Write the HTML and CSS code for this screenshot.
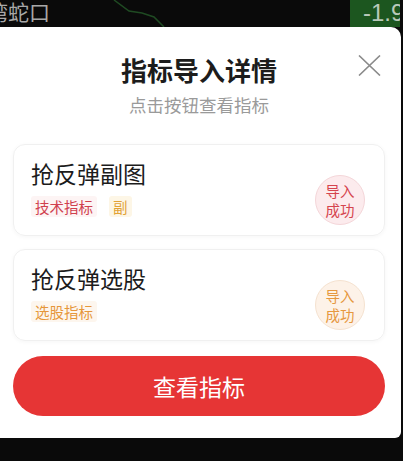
FILE: index.html
```html
<!DOCTYPE html>
<html lang="zh-CN">
<head>
    <meta charset="UTF-8">
    <meta name="viewport" content="width=device-width, initial-scale=1.0">
    <title>指标导入详情</title>
    <link rel="stylesheet" href="styles.css">
</head>
<body>
    <div class="topbar">
        <span class="stock-name">湾蛇口</span>
        <svg class="chart-line" width="120" height="27" viewBox="0 0 120 27">
            <polyline points="12,0 27,11 40,13 52,17 62,27" fill="none" stroke="#1f4a22" stroke-width="1.5"/>
        </svg>
        <span class="change">-1.9</span>
    </div>

    <div class="sheet">
        <div class="sheet-header">
            <h1>指标导入详情</h1>
            <p class="subtitle">点击按钮查看指标</p>
            <svg class="close" width="23" height="21" viewBox="0 0 23 21">
                <path d="M1 0.5 L22 20.5 M22 0.5 L1 20.5" stroke="#8a8a8a" stroke-width="1.6" fill="none"/>
            </svg>
        </div>

        <div class="card">
            <div class="card-info">
                <div class="card-title">抢反弹副图</div>
                <div class="tags">
                    <span class="tag tag-red">技术指标</span>
                    <span class="tag tag-yellow">副</span>
                </div>
            </div>
            <div class="status status-red">导入<br>成功</div>
        </div>

        <div class="card">
            <div class="card-info">
                <div class="card-title">抢反弹选股</div>
                <div class="tags">
                    <span class="tag tag-orange">选股指标</span>
                </div>
            </div>
            <div class="status status-orange">导入<br>成功</div>
        </div>

        <button class="view-btn">查看指标</button>
    </div>
</body>
</html>
```

FILE: styles.css
```css
body {
    margin: 0;
    background-color: #0a0a0a;
    font-family: "Noto Sans CJK SC", "Noto Sans", sans-serif;
    width: 403px;
    height: 461px;
    overflow: hidden;
}
.topbar {
    height: 27px;
    display: flex;
    align-items: flex-start;
    overflow: hidden;
}
.stock-name {
    color: #a8a8a8;
    font-size: 21px;
    line-height: 22px;
    margin-left: -13px;
    width: 115px;
    flex-shrink: 0;
}
.chart-line {
    flex-shrink: 0;
}
.change {
    margin-left: auto;
    margin-right: 3px;
    width: 50px;
    height: 27px;
    background-color: #1c561f;
    color: #b9c9b9;
    font-family: "Liberation Sans", sans-serif;
    font-size: 24px;
    line-height: 26px;
    padding-left: 13px;
    box-sizing: border-box;
    white-space: nowrap;
    overflow: hidden;
}
.sheet {
    position: relative;
    width: 401px;
    height: 411px;
    background-color: #fff;
    border-radius: 0 10px 6px 0;
    padding: 0 16px 0 13px;
    box-sizing: border-box;
    display: flex;
    flex-direction: column;
}
.sheet-header {
    text-align: center;
    padding-top: 27px;
    margin-bottom: 28px;
}
h1 {
    margin: 0;
    font-size: 26px;
    line-height: 31px;
    font-weight: bold;
    color: #1c1c1c;
}
.subtitle {
    margin: 8px 0 0;
    font-size: 17.5px;
    line-height: 23px;
    color: #9a9a9a;
}
.close {
    position: absolute;
    top: 28px;
    right: 20px;
}
.card {
    height: 92px;
    box-sizing: border-box;
    border: 1px solid #f0f0f0;
    border-radius: 12px;
    box-shadow: 0 1px 4px rgba(0, 0, 0, 0.04);
    padding: 14px 19px 0 17px;
    display: flex;
    margin-bottom: 13px;
}
.card-info {
    flex: 1;
}
.card-title {
    font-size: 23px;
    line-height: 29px;
    color: #1c1c1c;
}
.tags {
    margin-top: 8px;
    display: flex;
    gap: 12px;
}
.tag {
    font-size: 14.5px;
    line-height: 21px;
    padding: 0 4px;
    border-radius: 3px;
}
.tag-red {
    color: #d0404e;
    background-color: #fdf4f4;
}
.tag-yellow {
    color: #e2a236;
    background-color: #fdf6e6;
}
.tag-orange {
    color: #e6963a;
    background-color: #fdf6ee;
}
.status {
    width: 50px;
    height: 50px;
    border-radius: 50%;
    box-sizing: border-box;
    align-self: center;
    margin-top: 6px;
    font-size: 14.5px;
    line-height: 19px;
    text-align: center;
    padding-top: 5px;
}
.status-red {
    color: #d5444e;
    background-color: #fcebed;
    border: 1px solid #f4d6d9;
}
.status-orange {
    color: #e6983f;
    background-color: #fdf2e8;
    border: 1px solid #f5e2d0;
}
.view-btn {
    margin-top: 2px;
    height: 60px;
    border: none;
    border-radius: 30px;
    background-color: #e63535;
    color: #fff;
    font-family: inherit;
    font-size: 23px;
    cursor: pointer;
}
```
